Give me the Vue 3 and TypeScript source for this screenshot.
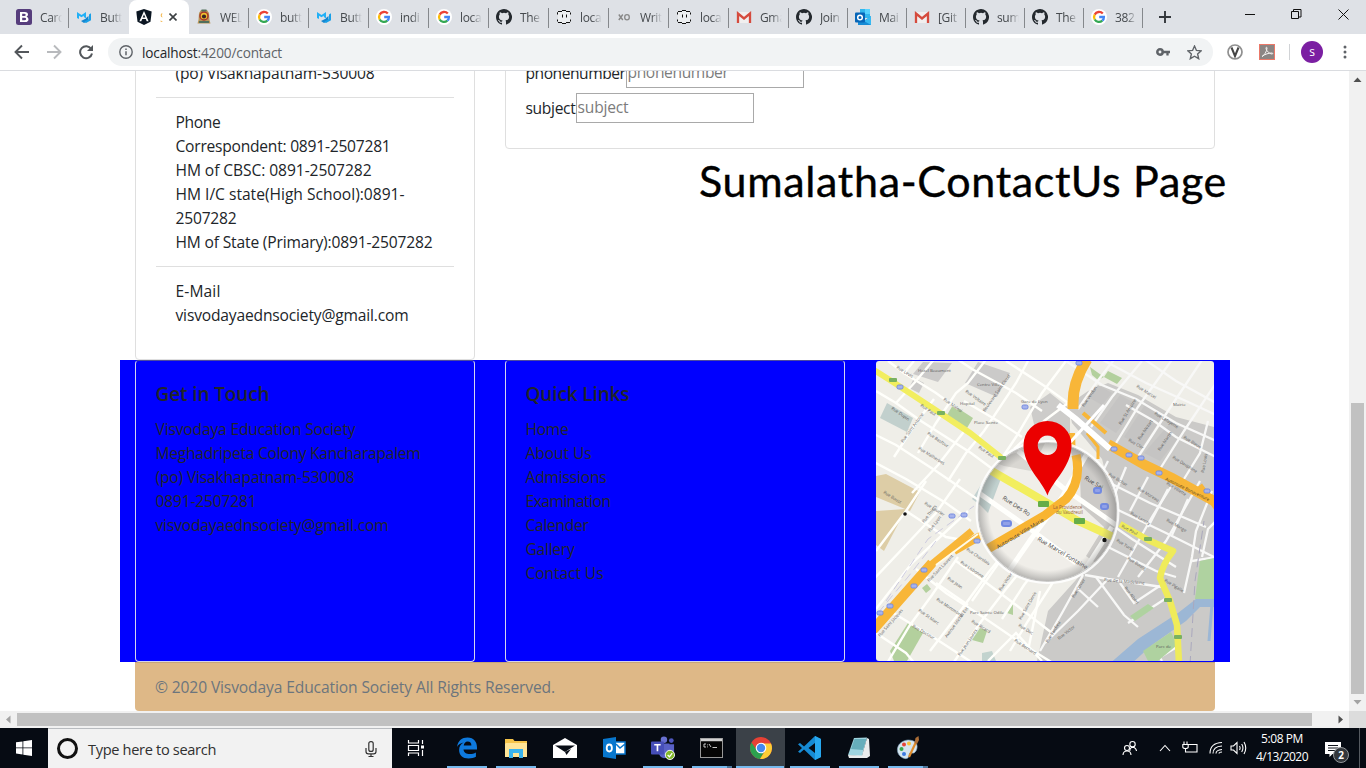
<script setup lang="ts">
interface Tab { icon: string; title: string; width: number; active?: boolean; sep?: boolean }
interface Line { text: string; w: number }

// Spreads the letters of an element so that its text takes the given width.
const vFit = {
  mounted(el: HTMLElement, binding: { value: number }) {
    const n = (el.textContent || '').trim().length
    const now = el.getBoundingClientRect().width
    if (n > 0 && binding.value) el.style.letterSpacing = ((binding.value - now) / n).toFixed(3) + 'px'
  },
}

const tabs: Tab[] = [
  { icon: 'bootstrap', title: 'Carc', width: 60, sep: true },
  { icon: 'mdb', title: 'Butt', width: 60 },
  { icon: 'angular', title: 'S', width: 60, active: true },
  { icon: 'school', title: 'WEL', width: 60, sep: true },
  { icon: 'google', title: 'butt', width: 60, sep: true },
  { icon: 'mdb', title: 'Butt', width: 60, sep: true },
  { icon: 'google', title: 'indi', width: 60, sep: true },
  { icon: 'google', title: 'loca', width: 60, sep: true },
  { icon: 'github', title: 'The', width: 60, sep: true },
  { icon: 'face', title: 'loca', width: 60, sep: true },
  { icon: 'xo', title: 'Writ', width: 60, sep: true },
  { icon: 'face', title: 'loca', width: 60, sep: true },
  { icon: 'gmail', title: 'Gma', width: 60, sep: true },
  { icon: 'github', title: 'Join', width: 59, sep: true },
  { icon: 'outlook', title: 'Mai', width: 59, sep: true },
  { icon: 'gmail', title: '[Git', width: 59, sep: true },
  { icon: 'github', title: 'sum', width: 59, sep: true },
  { icon: 'github', title: 'The', width: 59, sep: true },
  { icon: 'google', title: '382', width: 59, sep: true },
]

const address: Line[] = [{ text: '(po) Visakhapatnam-530008', w: 199 }]
const phones: Line[] = [
  { text: 'Phone', w: 45 },
  { text: 'Correspondent: 0891-2507281', w: 215 },
  { text: 'HM of CBSC: 0891-2507282', w: 196 },
  { text: 'HM I/C state(High School):0891-', w: 229 },
  { text: '2507282', w: 61 },
  { text: 'HM of State (Primary):0891-2507282', w: 257 },
]
const mails: Line[] = [
  { text: 'E-Mail', w: 45 },
  { text: 'visvodayaednsociety@gmail.com', w: 233 },
]
const groups = [address, phones, mails]

const touch: Line[] = [
  { text: 'Visvodaya Education Society', w: 200 },
  { text: 'Meghadripeta Colony Kancharapalem', w: 265 },
  { text: '(po) Visakhapatnam-530008', w: 199 },
  { text: '0891-2507281', w: 101 },
  { text: 'visvodayaednsociety@gmail.com', w: 233 },
]
const links: Line[] = [
  { text: 'Home', w: 43 },
  { text: 'About Us', w: 66 },
  { text: 'Admissions', w: 81 },
  { text: 'Examination', w: 85 },
  { text: 'Calender', w: 63 },
  { text: 'Gallery', w: 49 },
  { text: 'Contact Us', w: 78 },
]

const apps = [
  { icon: 'taskview', bar: 0 },
  { icon: 'edge', bar: 40 },
  { icon: 'explorer', bar: 40 },
  { icon: 'mailapp', bar: 0 },
  { icon: 'outlookapp', bar: 0 },
  { icon: 'teams', bar: 40 },
  { icon: 'cmd', bar: 40, multi: true },
  { icon: 'chrome', bar: 48, current: true },
  { icon: 'vscode', bar: 40 },
  { icon: 'notepad', bar: 40 },
  { icon: 'paint', bar: 40, multi: true },
]

// Street map geometry
const minorRoads = [
  'M0 30L20 42L45 60L95 92L130 118', 'M12 0L28 12L38 0', 'M28 12L60 32L82 48', 'M20 42L40 20L60 -4', 'M42 92L60 62L80 32L92 22L112 -4',
  'M-4 72L20 84L60 110L104 140', 'M-4 100L30 118L70 142L95 160', 'M18 96L40 62L58 38', 'M36 132L62 104L90 68', 'M72 120L90 92L108 70L140 22L152 0',
  'M78 -4L96 8L140 32L166 50', 'M88 40L122 60L146 76', 'M124 100L140 76L166 32L190 0', 'M130 0L170 26L192 42', 'M138 88L168 60L192 42',
  'M0 190L30 150L50 120', 'M-4 220L30 184L60 152L84 118', 'M0 248L36 202L92 150', 'M30 150L70 176L92 180',
  'M40 208L70 232L104 254L148 284L180 304', 'M14 250L60 278L100 304', 'M0 272L30 292L40 304', 'M10 304L34 264L56 234L82 196', 'M54 290L80 256L112 212L130 190',
  'M80 200L108 220L140 244L176 272', 'M96 240L124 200', 'M76 304L104 262L130 228L154 198', 'M126 258L148 224L162 206', 'M134 290L152 260L174 226L190 200',
  'M112 300L140 272L166 300', 'M60 222L92 244', 'M164 230L152 290',
]
const cityRoads = [
  'M190 0L226 24L260 38L300 62L340 80', 'M225 -2L270 22L310 40L340 54', 'M202 48L220 22L240 -4', 'M215 66L236 36L266 0', 'M240 82L262 46L298 -4',
  'M262 96L288 56L320 8L328 -4', 'M284 108L308 70L340 22', 'M308 118L324 92L332 60',
  'M268 -2L300 20L340 42', 'M250 44L278 60L300 76L340 96', 'M232 100L222 120', 'M250 106L236 140', 'M272 116L254 150', 'M292 128L272 166',
  'M312 138L296 174', 'M234 122L274 142L330 166', 'M240 148L290 172L338 196', 'M232 186L280 210L300 216', 'M236 164L256 178L300 206', 'M209 214L232 218L286 226',
  'M242 216L276 156L296 124', 'M262 216L290 180L306 152L324 120', 'M232 218L202 250L169 282', 'M207 214L186 252L164 290', 'M220 216L248 254L262 266',
  'M200 226L222 246', 'M244 222L258 242L288 222', 'M252 262L292 236', 'M308 232L316 196L320 170L336 130', 'M316 200L340 196', 'M326 196L332 168L340 160', 'M278 286L286 300', 'M268 290L278 300L304 284',
]
const cityBlocks = [
  'M222 24L236 32L226 44L212 36Z', 'M244 34L262 44L240 72L224 62Z', 'M270 42L288 53L266 86L248 76Z', 'M296 60L308 70L284 100L268 92Z',
]
const labels = [
  { t: 'Rue Paul', x: 44, y: 42, a: 34 }, { t: 'Rue Paul', x: 102, y: 84, a: 34 }, { t: 'Rue Malesi', x: 67, y: 36, a: 35 }, { t: 'Rue Voltaire', x: 89, y: 28, a: 35 },
  { t: 'Rue Dupin', x: 15, y: 45, a: 35 }, { t: 'Rue Basfour', x: 51, y: 70, a: 34 }, { t: 'Rue Saint Antoine', x: 27, y: 79, a: -54 }, { t: 'Rue Malherbes', x: 42, y: 85, a: 32 },
  { t: 'Boulevard Saint Cloud', x: 109, y: 48, a: -55 }, { t: 'Rue Boust', x: 7, y: 129, a: 32 }, { t: 'Rue Laurier', x: 48, y: 140, a: 32 }, { t: 'Rue Levis', x: 20, y: 4, a: 32 },
  { t: 'Hotel Beaumont', x: 42, y: 8, a: 0 }, { t: 'Centre Ville', x: 101, y: 22, a: 0 }, { t: 'Hopital', x: 84, y: 41, a: 0 }, { t: 'Place Sainte', x: 98, y: 60, a: 0 },
  { t: 'Rue Lyon', x: 54, y: 168, a: -52 }, { t: 'Rue Thiers', x: 48, y: 159, a: -52 }, { t: 'Rue Charolais', x: 90, y: 186, a: 34 }, { t: 'Rue Lisbonne', x: 84, y: 199, a: 34 },
  { t: 'Rue Jean', x: 71, y: 215, a: 35 }, { t: 'Rue Saint Laurent', x: 53, y: 218, a: -46 }, { t: 'Rue Montmorel', x: 60, y: 236, a: 34 }, { t: 'Rue St Marc', x: 42, y: 247, a: 35 },
  { t: 'Rue Docteur', x: 36, y: 263, a: 30 }, { t: 'Rue Saint Jacques', x: 4, y: 273, a: -49 }, { t: 'Avenue Michel Est', x: 71, y: 274, a: -54 }, { t: 'Parc Sainte Odile', x: 94, y: 250, a: 0 },
  { t: 'Rue Ricard', x: 95, y: 258, a: 32 }, { t: 'Rue Duc', x: 142, y: 262, a: 32 }, { t: 'Rue Bernard', x: 138, y: 277, a: 34 }, { t: 'Rue Saint Denis', x: 145, y: 256, a: -60 },
  { t: 'Rue Victor', x: 125, y: 227, a: -56 }, { t: 'Rue Jean Jaures', x: 84, y: 292, a: -56 }, { t: 'Rue Cler', x: 252, y: 77, a: 30 }, { t: 'Rue Marcel', x: 260, y: 23, a: 32 },
  { t: 'Rue St Antoine', x: 245, y: 61, a: -58 }, { t: 'Rue Mozart', x: 264, y: 76, a: -56 }, { t: 'Rue Martin', x: 284, y: 87, a: -56 }, { t: 'Rue Verdun', x: 208, y: 43, a: -56 },
  { t: 'Rue Lafayette', x: 278, y: 50, a: 32 }, { t: 'Rue Bleue', x: 307, y: 74, a: 32 }, { t: 'Rue Dauphine', x: 296, y: 94, a: 32 }, { t: 'Rue Villette', x: 290, y: 120, a: 32 },
  { t: 'Rue Bichat', x: 232, y: 111, a: 32 }, { t: 'Rue Moreau', x: 261, y: 125, a: 32 }, { t: 'Rue Louis', x: 328, y: 109, a: -80 }, { t: 'Mairie', x: 297, y: 42, a: 0 },
  { t: 'Rue Paul', x: 245, y: 163, a: 28 }, { t: 'Rue Turbi', x: 240, y: 177, a: 32 }, { t: 'Rue Bourg', x: 251, y: 195, a: 32 }, { t: 'Rue Lancry', x: 254, y: 150, a: 30 },
  { t: 'Rue Monge', x: 290, y: 157, a: 30 }, { t: 'Rue de la Madeleine', x: 228, y: 217, a: 5 }, { t: 'Rue Albert', x: 248, y: 224, a: 52 }, { t: 'Rue Pigalle', x: 288, y: 217, a: 32 },
  { t: 'Rue Tardieu', x: 172, y: 279, a: -58 }, { t: 'Rue Cuvier', x: 198, y: 234, a: -58 }, { t: 'Rue Victor', x: 183, y: 276, a: -38 }, { t: 'Parc de', x: 280, y: 284, a: 0 }, { t: 'Gare de Lyon', x: 145, y: 39, a: 0 },
]
const badges = [
  [24, 26], [149, 46], [76, 155], [88, 154], [48, 209], [38, 225], [14, 245], [4, 252], [101, 180],
  [238, 88], [253, 94], [265, 97], [283, 112], [331, 130], [203, 2],
]
const greenTags = [[17, 19], [65, 52], [126, 97], [272, 178], [292, 239], [302, 276]]
</script>

<template>
  <svg class="defs" width="0" height="0">
    <symbol id="i-bootstrap" viewBox="0 0 16 16"><rect width="16" height="16" rx="2.500" fill="#563d7c" /><path d="M4 3h4.800q3.200 0 3.200 2.600 0 1.600-1.400 2.100 1.900.5 1.900 2.500 0 2.800-3.400 2.800H4zM6.200 4.800v2.200h2q1.500 0 1.500-1.100T8.200 4.800zM6.200 8.700v2.500h2.200q1.700 0 1.700-1.250T8.400 8.700z" fill="#fff" fill-rule="evenodd" /></symbol>
    <symbol id="i-mdb" viewBox="0 0 16 16"><path d="M1 3l4.500 3L10 3v6.500L7.800 8V6.800L5.500 8.300 3 6.700V10L1 9z" fill="#22b0f6" /><path d="M10 3v6.500L5 12l3 2 4.500-3V7L10 9z" fill="#1686cf" /><path d="M13 5.500l2-1.200v6.900L10 14l-2-1 5-3z" fill="#18a0e8" /></symbol>
    <symbol id="i-angular" viewBox="0 0 16 16"><path d="M8 0l7.700 2.600-1.200 10.200L8 16l-6.500-3.200L.3 2.600z" fill="#0b1622" /><path d="M8 2L3.400 12.200h1.900l.9-2.300h3.600l.9 2.300h1.900zM8 5.500l1.300 3H6.700z" fill="#fff" fill-rule="evenodd" /></symbol>
    <symbol id="i-school" viewBox="0 0 16 16"><path d="M5 1h6l2 3 .5 7 1 3.500h-13l1-3.500L3 4z" fill="#b99457" /><circle cx="8" cy="7" r="4" fill="#f0c02e" stroke="#a8362c" stroke-width="1.500" /><circle cx="8" cy="7.500" r="2.100" fill="#382522" /><path d="M5.500 1.500h5M3 13h10" stroke="#52705c" stroke-width="1.800" /></symbol>
    <symbol id="i-google" viewBox="0 0 16 16"><circle cx="8" cy="8" r="8" fill="#fff" /><g fill="none" stroke-width="2.300"><path d="M11.800 4.600A5 5 0 0 0 3.700 5.600" stroke="#ea4335" /><path d="M3.700 5.600a5 5 0 0 0 0 4.900" stroke="#fbbc05" /><path d="M3.700 10.500a5 5 0 0 0 7.600 1.200" stroke="#34a853" /><path d="M11.300 11.700A4.600 4.600 0 0 0 12.900 8H8.200" stroke="#4285f4" /></g></symbol>
    <symbol id="i-github" viewBox="0 0 16 16"><path fill="#24292e" d="M8 0C3.580 0 0 3.580 0 8c0 3.540 2.290 6.530 5.470 7.590.4.070.55-.17.55-.38 0-.19-.01-.82-.01-1.490-2.010.37-2.530-.49-2.690-.94-.09-.23-.48-.94-.82-1.130-.28-.15-.68-.52-.01-.53.63-.01 1.080.58 1.230.82.72 1.210 1.870.87 2.330.66.07-.52.28-.87.51-1.070-1.780-.2-3.640-.89-3.640-3.950 0-.87.31-1.590.82-2.150-.08-.2-.36-1.020.08-2.120 0 0 .67-.21 2.200.82a7.600 7.600 0 0 1 4 0c1.530-1.040 2.200-.82 2.200-.82.44 1.100.16 1.920.08 2.120.51.56.82 1.270.82 2.150 0 3.070-1.870 3.750-3.650 3.950.29.25.54.73.54 1.480 0 1.070-.01 1.930-.01 2.200 0 .21.15.46.55.38A8 8 0 0 0 8 0z" /></symbol>
    <symbol id="i-face" viewBox="0 0 16 16"><rect x="2" y="2" width="12" height="12" fill="#eceef0" /><path d="M1.500 5.500V3.500H2M2 2.500h4M6 1.500h4M10 2.500h4M14.500 3.500v2M1.500 10.500v2M2 13.500h4M6 14.500h4M10 13.500h4M14.500 10.500v2M6.500 5.500v3M10.500 5.500v3" fill="none" stroke="#111" /></symbol>
    <symbol id="i-xo" viewBox="0 0 16 16"><path d="M2.800 5.500l4 5.500M6.800 5.500L2.800 11" stroke="#888" stroke-width="1.400" /><ellipse cx="11" cy="8.200" rx="2.300" ry="2.600" fill="none" stroke="#888" stroke-width="1.300" /></symbol>
    <symbol id="i-gmail" viewBox="0 0 16 16"><rect x="1" y="3" width="14" height="11" fill="#f1efef" /><path d="M2 14V4.500l6 5 6-5V14" fill="none" stroke="#d54b3e" stroke-width="2.300" /></symbol>
    <symbol id="i-outlook" viewBox="0 0 16 16"><path d="M5 0h10v9H5z" fill="#32b7ee" /><path d="M10 0h5v5h-5z" fill="#57d3ff" /><path d="M3 8l6 4 7-5v9H3z" fill="#168bd5" /><path d="M9 12l7-5v9z" fill="#37b9f2" /><rect y="3.500" width="10" height="10" rx="1" fill="#0766b8" /><circle cx="5" cy="8.500" r="2.300" fill="none" stroke="#fff" stroke-width="1.500" /></symbol>
    <symbol id="i-taskview" viewBox="0 0 24 24"><g fill="none" stroke="#fff" stroke-width="1.200"><path d="M4.500 4v3h10V4M4.500 20v-3h10v3M4.500 9.500h10v5h-10zM18.500 4v4M18.500 14v6" /></g><rect x="17" y="9.500" width="3" height="3" fill="#fff" /></symbol>
    <symbol id="i-edge" viewBox="0 0 24 24"><path d="M2 11C3 4.500 7 1.500 12.500 1.500 19 1.500 22 6 22 11.500v2H8.500c.2 3.200 3 4.600 6.300 4.600 2.300 0 4.300-.7 6.100-1.700v4.400c-2 1.100-4.400 1.700-7.300 1.700-6 0-9.500-3.400-9.500-8.500 0-3.300 1.700-6 4.600-7.400C5 7.500 3 9 2 11zm6.700-1.500h7.700c0-2.500-1.300-4-3.700-4-2.300 0-3.600 1.700-4 4z" fill="#0e7ade" fill-rule="evenodd" /></symbol>
    <symbol id="i-explorer" viewBox="0 0 24 24"><path d="M1 3h8l1.500 2H23v16H1z" fill="#f5c449" /><path d="M2 7h21v14H1V8z" fill="#ffe597" /><path d="M5 13h14v9h-4v-5H9v5H5z" fill="#39b3ed" /></symbol>
    <symbol id="i-mailapp" viewBox="0 0 24 24"><path d="M0 9L12 2l12 7v13H0z" fill="#fff" /><path d="M2 9.500h20L12 16z" fill="#080d15" /><path d="M12 16l6-3-4.500 6z" fill="#080d15" /></symbol>
    <symbol id="i-outlookapp" viewBox="0 0 24 24"><path d="M1 3l13-2v22L1 21z" fill="#0877ce" /><ellipse cx="7.300" cy="12" rx="2.600" ry="3.500" fill="none" stroke="#fff" stroke-width="1.800" /><path d="M14 6h9v12h-9z" fill="#fff" /><path d="M14 8l4 4 5-4M14 18h9V6h-9" fill="none" stroke="#0877ce" stroke-width="1.500" /></symbol>
    <symbol id="i-teams" viewBox="0 0 26 26"><circle cx="14" cy="4" r="3.500" fill="#6870d1" /><circle cx="22" cy="5" r="2.600" fill="#4f57be" /><path d="M11 8h9v12q-2 4-6 4-5-1-6-7zM20 9h5v8q-1 4-5 4z" fill="#5961c6" /><rect y="6" width="14" height="14" rx="1" fill="#464eb8" /><path d="M3.500 9.500h7M7 9.500v7" stroke="#fff" stroke-width="1.800" /><circle cx="20.500" cy="20.500" r="5" fill="#83b92c" stroke="#fff" /><path d="M18 20.500l2 2 3-4" fill="none" stroke="#fff" stroke-width="1.400" /></symbol>
    <symbol id="i-cmd" viewBox="0 0 24 24"><rect x=".5" y="2.500" width="22" height="19" fill="#050505" stroke="#989898" /><path d="M1 4h21" stroke="#d2d2d2" stroke-width="2.500" /><path d="M6 8H4v3h2M7.500 8.500v.8M7.500 10.500v.8M9 8l2 3M12.500 11.500H17" fill="none" stroke="#ddd" stroke-width=".9" /></symbol>
    <symbol id="i-chrome" viewBox="0 0 24 24"><circle cx="12" cy="12" r="11" fill="#e64135" /><path d="M2.500 6.500A11 11 0 0 0 11 23l5-8.500H8z" fill="#2ca14e" /><path d="M11 23A11 11 0 0 0 22 7.500H12l4.300 7z" fill="#fcce35" /><circle cx="12" cy="12" r="5.300" fill="#fff" /><circle cx="12" cy="12" r="4.200" fill="#4489ee" /></symbol>
    <symbol id="i-vscode" viewBox="0 0 24 24"><path d="M17 0l6 3v18l-6 3L6 13.500 2 17l-2-1.300L4 12 0 8.300 2 7l4 3.500zM17 7l-6.500 5L17 17z" fill="#168bd4" fill-rule="evenodd" /><path d="M17 0l6 3v18l-6 3z" fill="#27a8ef" /></symbol>
    <symbol id="i-notepad" viewBox="0 0 24 24"><path d="M7 2l13-.5-5 19L1 19z" fill="#9fd4df" /><path d="M7.500 3h12L16 14 4 13z" fill="#66aebb" /><path d="M20 2l2 1 1 17-3 2H2l-1-3 14 .5z" fill="#e9ecec" /></symbol>
    <symbol id="i-paint" viewBox="0 0 24 24"><path d="M12 4C20 4 23 9 20 15q-2 3-4 2-3-1-3 3-1 4-6 2C-2 18 0 5 12 4z" fill="#d5e5ef" stroke="#83a9c3" stroke-width=".6" /><circle cx="5.500" cy="13" r="2" fill="#37a74b" /><circle cx="8" cy="8.500" r="2" fill="#e54538" /><circle cx="13" cy="7.500" r="2" fill="#f6c03a" /><circle cx="8" cy="18" r="2" fill="#3d7be0" /><path d="M13 21L20 6" stroke="#dd8c2c" stroke-width="2.200" /><path d="M18.500 7l1-5 3-2 .5 4-2 4z" fill="#ab6d36" /></symbol>
  </svg>

  <div class="screen">
    <header class="tabstrip">
      <div class="tabs">
        <div v-for="(t, i) in tabs" :key="i" class="tab" :class="{ active: t.active, sep: t.sep }" :style="{ width: t.width + 'px' }">
          <svg class="fav"><use :href="'#i-' + t.icon" /></svg>
          <span class="tab-title">{{ t.title }}</span>
          <svg v-if="t.active" class="tab-close" viewBox="0 0 8 8"><path d="M.5.5l7 7M7.500.5l-7 7" /></svg>
        </div>
        <svg class="plus" viewBox="0 0 12 12"><path d="M6 0v12M0 6h12" stroke="#33373b" stroke-width="1.900" /></svg>
      </div>
      <div class="winctl">
        <svg width="10" height="12" viewBox="0 0 10 12"><path d="M0 5.500h10" /></svg>
        <svg width="11" height="11" viewBox="0 0 11 11"><path d="M.5 2.500h7v7h-7zM2.500 2.500v-2h7.500v7.500h-2.500" /></svg>
        <svg width="11" height="11" viewBox="0 0 11 11"><path d="M.5.5l10 10M10.500.5l-10 10" /></svg>
      </div>
    </header>

    <nav class="toolbar">
      <svg class="nav" viewBox="0 0 16 16"><path d="M15 8H2M8 1.500L1.500 8 8 14.500" fill="none" stroke="#53575b" stroke-width="1.900" /></svg>
      <svg class="nav" viewBox="0 0 16 16"><path d="M1 8h13M8 1.500L14.500 8 8 14.500" fill="none" stroke="#b8babd" stroke-width="1.900" /></svg>
      <svg class="nav" viewBox="0 0 16 16"><path d="M13.200 5A6 6 0 1 0 14 9.500" fill="none" stroke="#53575b" stroke-width="2" /><path d="M15 1v6H9z" fill="#53575b" /></svg>
      <div class="omnibox">
        <svg class="info" viewBox="0 0 14 14"><circle cx="7" cy="7" r="6.200" fill="none" stroke="#5f6368" stroke-width="1.400" /><path d="M7 6.200v4M7 3.500v1.500" stroke="#5f6368" stroke-width="1.500" /></svg>
        <span class="url" v-fit="140"><b>localhost</b>:4200/contact</span>
        <svg class="key" viewBox="0 0 14 8"><circle cx="4" cy="4" r="2.700" fill="none" stroke="#5f6368" stroke-width="2.500" /><path d="M6 4h8M11.500 4v3.500" stroke="#5f6368" stroke-width="2.300" /></svg>
        <svg class="star" viewBox="0 0 14 14"><path d="M7 1l1.800 4.100 4.400.4-3.300 2.900 1 4.400L7 10.500l-3.900 2.300 1-4.400L.8 5.500l4.400-.4z" fill="none" stroke="#5f6368" stroke-width="1.300" /></svg>
      </div>
      <svg class="ext" viewBox="0 0 16 16"><circle cx="8" cy="8" r="7" fill="#fff" stroke="#909090" stroke-width="1.700" /><path d="M4.500 3.500L8 12l3.500-8.500" fill="none" stroke="#444" stroke-width="2" /></svg>
      <svg class="ext pdf" viewBox="0 0 16 16"><rect x=".5" y=".5" width="15" height="15" fill="#8b8583" stroke="#eb7868" /><path d="M3 12.500c2-1 5-5 5-8.500 0-1-1-1-1 0 0 3 4 6 6 6 1 0 1-1 0-1-3 0-7 1-10 3.500z" fill="none" stroke="#f5f2f1" /></svg>
      <span class="bar"></span>
      <span class="avatar">s</span>
      <svg class="dots" viewBox="0 0 4 14"><circle cx="2" cy="2" r="1.500" /><circle cx="2" cy="7" r="1.500" /><circle cx="2" cy="12" r="1.500" /></svg>
    </nav>

    <div class="viewport">
      <main class="page">
        <div class="toprow">
          <section class="card contact">
            <div v-for="(g, gi) in groups" :key="gi" class="group">
              <div v-for="l in g" :key="l.text" class="line"><span v-fit="l.w">{{ l.text }}</span></div>
            </div>
          </section>
          <section class="rightcol">
            <div class="card form">
              <div class="field"><span v-fit="100">phonenumber</span><div class="input"><span v-fit="101">phonenumber</span></div></div>
              <div class="field"><span v-fit="50">subject</span><div class="input"><span v-fit="51">subject</span></div></div>
            </div>
            <h1><span v-fit="528">Sumalatha-ContactUs Page</span></h1>
          </section>
        </div>

        <div class="bluerow">
          <section class="bluecard">
            <h5><span v-fit="114">Get in Touch</span></h5>
            <div v-for="l in touch" :key="l.text" class="line"><span v-fit="l.w">{{ l.text }}</span></div>
          </section>
          <section class="bluecard">
            <h5><span v-fit="104">Quick Links</span></h5>
            <div v-for="l in links" :key="l.text" class="line"><span v-fit="l.w">{{ l.text }}</span></div>
          </section>
          <svg class="map" viewBox="0 0 338 300">
            <defs>
              <clipPath id="lens"><circle cx="171.500" cy="151" r="69" /></clipPath>
              <radialGradient id="shade"><stop offset=".82" stop-color="#777" stop-opacity="0" /><stop offset="1" stop-color="#666" stop-opacity=".5" /></radialGradient>
            </defs>
            <rect width="338" height="300" fill="#efeee8" />
            <path d="M212 30L232 22L262 34L300 56L338 66V300H161L172 250L208 210L242 160L226 98L196 62L192 44Z" fill="#cbcac8" />
            <path d="M154 46L174 32L194 48V80L160 72Z" fill="#cdccca" />
            <g fill="#cbcac9"><path d="M47 1L76 2L62 21L37 13Z" /><path d="M102 1L134 12L121 36L89 22Z" /><path d="M38 17L48 22L43 32L33 27Z" /></g>
            <path d="M11 42L37 57L31 71L4 57Z" fill="#c2d0cd" />
            <path d="M124 108L112 150L96 138L110 116Z" fill="#c3d1d0" />
            <g fill="#ddcda6"><path d="M0 115L10 113L44 131L34 150L0 136Z" /><path d="M0 150L30 148L8 190L0 184Z" /></g>
            <g fill="#b3d09d"><path d="M77 44L97 57L91 67L71 54Z" /><path d="M232 10L246 17L241 23L228 16Z" /><path d="M214 6L228 16L222 19L216 14Z" /><path d="M14 290L32 262L47 272L31 300H18Z" /><path d="M96 279L104 267L111 270L107 282Z" /><path d="M46 227L51 223L55 228L50 232Z" /><path d="M131 252L137 242V254Z" /></g>
            <path d="M106 292L116 290L120 300H106Z" fill="#c2d3ce" />
            <g fill="none" stroke="#fffffb" stroke-width="2.400">
              <path v-for="d in minorRoads" :key="d" :d="d" />
            </g>
            <g fill="#c5c4c3"><path v-for="d in cityBlocks" :key="d" :d="d" /></g>
            <g fill="none" stroke="#f8f8f7" stroke-width="2.300">
              <path v-for="d in cityRoads" :key="d" :d="d" />
            </g>
            <path d="M232 304L262 278L302 252L320 238H340V246H324L310 260L276 284L254 304Z" fill="#9cb7d5" />
            <path d="M336 243L333 280" stroke="#9cb7d5" stroke-width="3" />
            <g fill="#afd2a0"><path d="M324 200L338 197V238H319Z" /><path d="M267 290L295 271L301 284L282 300H272Z" /><path d="M254 255L272 243L278 247L259 260Z" /></g>
            <path d="M314 304L319 220L328 160" fill="none" stroke="#aaa8bd" stroke-width="1" stroke-dasharray="9 5" />
            <g fill="none" stroke="#c8c6dc" stroke-width=".9" stroke-dasharray="9 5"><path d="M10 240L52 178L98 145" /><path d="M2 252L32 216L60 180" /></g>
            <path d="M-2 9L17 21L61 50L94 72L127 98" fill="none" stroke="#f2ee5f" stroke-width="6" />
            <path d="M244 163L272 179L297 190Q286 204 284 217L294 240L301 264L303 302" fill="none" stroke="#efeb5a" stroke-width="6.500" stroke-linejoin="round" />
            <g fill="none" stroke="#f8b638" stroke-width="9">
              <path d="M211 -2Q197 20 197 42V48" stroke-width="11" />
              <path d="M196 72L197 100" stroke-width="6" />
              <path d="M207 52L230 72" stroke-width="4" />
              <path d="M232 83L269 104L296 117L338 140" stroke-width="10" />
              <path d="M-3 269L34 227L56 202" stroke-width="10" />
              <path d="M50 208L96 170" stroke-width="7" />
              <path d="M78 190L106 174" stroke-width="8" />
              <path d="M211 72L222 86V98" stroke-width="3" />
              <path d="M324 124L342 150" stroke-width="5" />
            </g>
            <path d="M182 44L200 58L234 88" fill="none" stroke="#fff" stroke-width="6" />
            <path d="M190 86L228 44" stroke="#fff" stroke-width="3" />
            <path d="M60 204L102 173" stroke="#fffbe8" stroke-width="2" />

            <circle cx="171.500" cy="151" r="70.500" fill="#fbfbf9" />
            <g clip-path="url(#lens)">
              <rect x="100" y="80" width="144" height="144" fill="#f0eee9" />
              <path d="M190 78L225 105L242 145L238 215L210 195L228 166L205 145L204 115Z" fill="#cccac7" />
              <path d="M115 100L145 90L170 80L155 110L128 105Z" fill="#d9d7d2" />
              <path d="M127 112L112 152L98 138L108 112Z" fill="#c0d0ce" />
              <g fill="none" stroke="#fffffc" stroke-width="5"><path d="M100 130L150 165L200 202" /><path d="M126 220L155 178L185 138L216 84" /><path d="M142 90L186 126L240 164" /><path d="M203 218L236 166" /></g>
              <path d="M114 109L161 136L202 160L242 178" fill="none" stroke="#f2ee5f" stroke-width="8" />
              <path d="M200 94Q206 120 190 138L168 155L108 190" fill="none" stroke="#f8b431" stroke-width="9" />
              <g fill="#444" font-size="6"><text transform="translate(126 138) rotate(33)">Rue Des Ro</text><text transform="translate(208 118) rotate(32)">Rue Sai</text><text transform="translate(122 188) rotate(-31)" font-size="5.500">Autoroute Ville Marie</text><text transform="translate(161 179) rotate(31)">Rue Marcel Fontaine</text></g>
              <g fill="#97613b" font-size="4.500"><text x="177" y="148">La Providence</text><text x="180" y="153">du Vaudreuil</text></g>
              <g stroke="#728ae2" stroke-width="2"><rect x="126" y="160" width="9" height="5" rx="2" fill="#91a1e8" /><rect x="218" y="127" width="7" height="5" rx="2" fill="#91a1e8" /><rect x="225" y="143" width="7" height="5" rx="2" fill="#91a1e8" /></g>
              <rect x="162" y="140" width="11" height="6" rx="1" fill="#66ad48" /><rect x="198" y="157" width="11" height="6" rx="1" fill="#66ad48" />
              <circle cx="171.500" cy="151" r="71" fill="url(#shade)" />
            </g>
            <circle cx="171.500" cy="151" r="69.500" fill="none" stroke="#999" stroke-width="1" opacity=".5" />
            <circle cx="171.500" cy="151" r="71" fill="none" stroke="#fff" stroke-width="2" opacity=".85" />
            <circle cx="228.500" cy="179" r="2.200" fill="#111" /><circle cx="29" cy="153" r="1.800" fill="#111" />

            <g class="streets">
              <text v-for="(l, i) in labels" :key="i" :transform="`translate(${l.x} ${l.y + 3}) rotate(${l.a})`">{{ l.t }}</text>
            </g>
            <text class="motorway" transform="translate(289 119) rotate(26)">Autoroute Bonaventure</text>
            <rect v-for="(b, i) in badges" :key="'b' + i" :x="b[0] - 3" :y="b[1] - 2" width="6" height="4" rx="1.500" fill="#a6b3ec" stroke="#748be0" />
            <rect v-for="(b, i) in greenTags" :key="'g' + i" :x="b[0] - 4" :y="b[1] - 2" width="8" height="4" rx="1" fill="#79b15f" />

            <path d="M171.500 134.500C166 119 147.500 106 147.500 84A24 24 0 0 1 195.500 84C195.500 106 177 119 171.500 134.500ZM171.500 74.500a9.800 9.800 0 1 0 .01 0Z" fill="#eb0000" fill-rule="evenodd" />
          </svg>
        </div>

        <footer><span v-fit="400">© 2020 Visvodaya Education Society All Rights Reserved.</span></footer>
      </main>
      <aside class="vscroll">
        <svg viewBox="0 0 17 17"><path d="M4.500 11h8l-4-4.500z" fill="#505050" /></svg>
        <i class="vthumb"></i>
        <svg viewBox="0 0 17 17"><path d="M4.500 6h8l-4 4.500z" fill="#a3a3a3" /></svg>
      </aside>
    </div>

    <div class="hscroll">
      <svg viewBox="0 0 17 17"><path d="M10.500 4.500v8L6 8.500z" fill="#a3a3a3" /></svg>
      <div class="htrack"><i class="hthumb"></i></div>
      <svg viewBox="0 0 17 17"><path d="M6.500 4.500v8l4.500-4z" fill="#505050" /></svg>
      <span class="corner"></span>
    </div>

    <div class="taskbar">
      <div class="start"><svg width="16" height="16" viewBox="0 0 16 16"><path d="M0 2.300l6.500-.9v6.100H0zM7.300 1.300L16 0v7.500H7.300zM0 8.300h6.500v6.200L0 13.600zM7.300 8.300H16V16l-8.700-1.300z" fill="#fff" /></svg></div>
      <div class="search">
        <i class="cortana"></i>
        <span v-fit="128">Type here to search</span>
        <svg class="mic" viewBox="0 0 12 16"><rect x="3.800" y=".6" width="4.400" height="9.800" rx="2" /><path d="M1 7v3.500q0 2.300 2.300 2.300h5.400q2.300 0 2.300-2.300V7M6 13v2.500M3.500 15.500h5" /></svg>
      </div>
      <div class="apps">
        <div v-for="a in apps" :key="a.icon" class="app" :class="{ current: a.current, multi: a.multi }">
          <svg class="glyph"><use :href="'#i-' + a.icon" /></svg>
          <i v-if="a.bar" class="under" :style="{ width: a.bar + 'px' }"></i>
        </div>
      </div>
      <div class="tray">
        <svg class="people" viewBox="0 0 16 16"><circle cx="10.500" cy="4.200" r="2.700" /><path d="M7.800 11Q8 7.500 10.500 7.300 14 7.500 14.500 11" /><circle cx="5" cy="8" r="2.500" /><path d="M1 15q.2-4 4-4t4 4" /></svg>
        <svg class="chev" viewBox="0 0 12 8"><path d="M1 7l5-5.500L11 7" /></svg>
        <svg class="batt" viewBox="0 0 16 16"><path d="M6 4.500h9v7.500H6M2 1.500v3M5 1.500v3M.8 4.500h5.400v2.500q0 1.500-2.700 1.500T.8 7zM3.500 8.500V12H6" /></svg>
        <svg class="wifi" viewBox="0 0 14 14"><path d="M1 12.500Q1 2 13 1.500M4 12.500Q4 5.500 13 5M7 12.500Q7 9 13 8.500M10 12.500q0-1.200 3-1.500" /></svg>
        <svg class="vol" viewBox="0 0 17 14"><path d="M1 5h2.500L7 1.500v11L3.500 9H1zM9.500 5q1.200 2 0 4M11.700 3q2.500 4 0 8M14 1q3.500 6 0 12" /></svg>
        <div class="clock"><span v-fit="42">5:08 PM</span><span v-fit="52">4/13/2020</span></div>
        <div class="notif">
          <svg width="16" height="15" viewBox="0 0 16 15"><path d="M0 0h16v12H7.500L4.500 15v-3H0z" fill="#fff" /><path d="M3 3.500h10M3 6h10M3 8.500h7" stroke="#10151c" /></svg>
          <b>2</b>
        </div>
        <i class="desk"></i>
      </div>
    </div>
  </div>
</template>

<style>
body { overflow: hidden; background: #fff; }
</style>

<style scoped>
* { box-sizing: border-box; }
.defs { position: absolute; }
.screen { width: 1366px; height: 768px; display: flex; flex-direction: column; overflow: hidden; font-family: "Open Sans", "Noto Sans", sans-serif; color: #212529; background: #fff; }
span { white-space: nowrap; }
.tabstrip { height: 34px; flex: none; background: #dee1e6; display: flex; justify-content: space-between; }
.tabs { display: flex; padding-left: 9px; align-items: stretch; }
.tab { position: relative; display: flex; align-items: center; padding-left: 7px; flex: none; }
.tab.sep::after { content: ""; position: absolute; right: 0; top: 8px; width: 1px; height: 20px; background: #85888c; }
.fav { width: 16px; height: 16px; flex: none; }
.tab-title { margin-left: 8px; width: 23px; overflow: hidden; font-size: 12px; letter-spacing: -.35px; color: #45494d; -webkit-mask-image: linear-gradient(90deg, #000 50%, transparent 96%); mask-image: linear-gradient(90deg, #000 50%, transparent 96%); }
.active { background: #fff; border-radius: 8px 8px 0 0; }
.active .tab-title { width: 3px; color: #f3b548; }
.tab-close { width: 8px; height: 8px; margin-left: 6px; fill: none; stroke: #3c4043; stroke-width: 1.6; }
.plus { width: 12px; height: 12px; align-self: center; margin-left: 16px; }
.winctl { display: flex; gap: 36px; padding: 9px 17px 0 0; }
.winctl svg { fill: none; stroke: #111; stroke-width: 1; }
.toolbar { height: 37px; flex: none; background: #fff; border-bottom: 1px solid #dadce0; display: flex; align-items: center; padding: 0 19px 0 14px; }
.nav { width: 16px; height: 16px; margin-right: 16px; }
.omnibox { width: 1105px; height: 28px; margin-left: -2px; border-radius: 14px; background: #f1f3f4; display: flex; align-items: center; padding: 0 11px; }
.info { width: 14px; height: 14px; margin-right: 9px; }
.url { font-size: 13.600px; color: #606468; }
.url b { font-weight: 400; color: #24272a; }
.key { width: 14px; height: 8px; margin-left: auto; }
.star { width: 15px; height: 15px; margin-left: 17px; }
.ext { width: 16px; height: 16px; margin-left: 14px; }
.ext.pdf { margin-left: 16px; }
.bar { width: 1px; height: 16px; background: #d1d3d6; margin-left: 14px; }
.avatar { width: 22px; height: 22px; border-radius: 50%; background: #7b1fa2; color: #fff; font-size: 12px; line-height: 21px; text-align: center; margin-left: 11px; }
.dots { width: 4px; height: 14px; margin-left: auto; fill: #5f6368; }

.viewport { height: 640px; flex: none; display: flex; overflow: hidden; }
.page { width: 1349px; height: 640px; overflow: hidden; flex: none; }
.toprow { height: 289px; display: flex; padding-left: 135px; gap: 30px; }
.card { border: 1px solid #dfdfdf; border-radius: 4px; background: #fff; }
.contact { width: 340px; height: 299px; margin-top: -10px; padding: 0 20px; font-size: 15.600px; }
.group { padding: 12px 19.500px; border-bottom: 1px solid #dfdfdf; }
.group:first-child { padding-top: 0; margin-top: -1px; }
.group:last-child { border-bottom: 0; }
.line { height: 24px; line-height: 24px; }
.form { width: 710px; height: 98px; margin-top: -20px; padding: 6px 20px 6px 19.500px; font-size: 15.600px; }
.field { height: 30px; margin-bottom: 5px; display: flex; align-items: center; line-height: 28px; }
.input { width: 178px; height: 30px; border: 1px solid #a9a9a9; padding-left: 1px; line-height: 27px; color: #7c7c7c; }
h1 { margin: 2px 0 0 194px; font: 400 43px/60px Lato, "Open Sans", sans-serif; color: #000; -webkit-text-stroke: .4px #000; }
.bluerow { width: 1110px; height: 302px; margin-left: 120px; padding: 0 15px; background: #00f; display: flex; gap: 30px; }
.bluecard { width: 340px; height: 302px; border: 1px solid #d4d4f0; border-top-color: #4b4ba0; border-radius: 4px; padding: 20px 19.500px; font-size: 15.600px; color: #212529; }
h5 { margin: 1px 0 11px; font-size: 19px; font-weight: 600; line-height: 24px; }
.map { width: 338px; height: 300px; margin: 1px 0 0 1px; border-radius: 3px; }
.streets { font-size: 4.300px; fill: #5c5c5c; }
.motorway { font-size: 4.400px; fill: #5b4520; }
footer { width: 1080px; height: 49px; margin-left: 135px; padding-left: 20px; background: #deb887; border-top: 1px solid #c5a47a; border-radius: 0 0 4px 4px; font-size: 15.600px; line-height: 48px; color: #6c757d; }
.vscroll { width: 17px; background: #f1f1f1; display: flex; flex-direction: column; }
.vscroll svg, .hscroll svg { width: 17px; height: 17px; flex: none; }
.vthumb { width: 13px; height: 291px; margin: auto 2px 0; background: #c1c1c1; }
.hscroll { height: 17px; flex: none; display: flex; background: #f1f1f1; }
.htrack { width: 1315px; padding-top: 2px; }
.hthumb { display: block; width: 1295px; height: 13px; background: #c1c1c1; }
.corner { width: 17px; background: #dcdcdc; }

.taskbar { height: 40px; flex: none; background: #060b13; display: flex; color: #fff; }
.start { width: 48px; display: grid; place-items: center; }
.search { width: 344px; background: #f2f2f2; border-top: 1px solid #b9bcc0; color: #303030; display: flex; align-items: center; padding: 0 15px 0 9px; font-size: 14.600px; }
.cortana { width: 21px; height: 21px; border: 3px solid #111; border-radius: 50%; margin-right: 10px; }
.mic { width: 12px; height: 16px; margin-left: auto; fill: none; stroke: #333; stroke-width: 1.200; }
.apps { display: flex; }
.app { width: 49px; height: 40px; display: grid; place-items: center; position: relative; }
.app:first-child { width: 50px; padding-right: 3px; }
.glyph { width: 24px; height: 24px; }
.current { background: #3b4148; }
.under { position: absolute; bottom: 0; left: 5px; height: 2px; background: #76b9ed; }
.current .under { left: 0; }
.multi .under { border-right: 5px solid #4c769a; }
.tray { margin-left: auto; display: flex; align-items: center; }
.tray svg { fill: none; stroke: #fff; stroke-width: 1.100; }
.people { width: 16px; height: 16px; margin-right: 21px; }
.chev { width: 12px; height: 8px; margin-right: 11px; }
.batt { width: 16px; height: 16px; margin-right: 11px; }
.wifi { width: 14px; height: 14px; margin-right: 7px; }
.vol { width: 17px; height: 14px; margin-right: 9px; }
.clock { width: 52px; display: flex; flex-direction: column; align-items: center; font-size: 12px; line-height: 18px; }
.notif { position: relative; width: 34px; height: 40px; margin-left: 17px; padding-top: 12px; }
.notif svg { stroke: none; }
.notif b { position: absolute; left: 8px; top: 19px; width: 16px; height: 16px; border: 1px solid #92969a; border-radius: 50%; background: #33373c; font-size: 10px; line-height: 14px; text-align: center; }
.desk { width: 1px; height: 40px; background: #555a60; margin-right: 6px; }
</style>
